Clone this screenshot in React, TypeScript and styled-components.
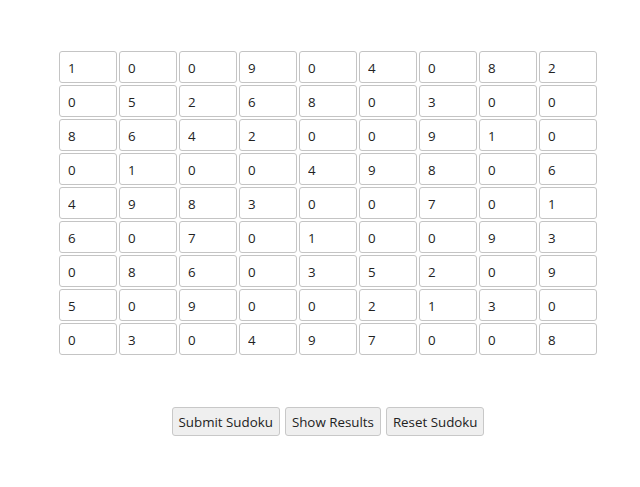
import React, { useState } from 'react';
import styled, { createGlobalStyle } from 'styled-components';

const START: number[][] = [
    [1, 0, 0, 9, 0, 4, 0, 8, 2],
    [0, 5, 2, 6, 8, 0, 3, 0, 0],
    [8, 6, 4, 2, 0, 0, 9, 1, 0],
    [0, 1, 0, 0, 4, 9, 8, 0, 6],
    [4, 9, 8, 3, 0, 0, 7, 0, 1],
    [6, 0, 7, 0, 1, 0, 0, 9, 3],
    [0, 8, 6, 0, 3, 5, 2, 0, 9],
    [5, 0, 9, 0, 0, 2, 1, 3, 0],
    [0, 3, 0, 4, 9, 7, 0, 0, 8],
];

const Global = createGlobalStyle`
    body {
        margin: 0;
        background: #fff;
        font-family: 'Open Sans', 'Noto Sans', sans-serif;
    }
`;

const App = () => {
    const [board, setBoard] = useState(START);

    const setCell = (r: number, c: number, v: string) => {
        const next = board.map((row) => row.slice());
        next[r][c] = Number(v) || 0;
        setBoard(next);
    };

    return (
        <Page>
            <Global />
            <Board>
                {board.map((row, r) => (
                    <Row key={r}>
                        {row.map((val, c) => (
                            <Cell
                                key={c}
                                type='text'
                                value={String(val)}
                                onChange={(e) => setCell(r, c, e.target.value)}
                            />
                        ))}
                    </Row>
                ))}
            </Board>
            <Actions>
                <Button>Submit Sudoku</Button>
                <Button>Show Results</Button>
                <Button onClick={() => setBoard(START)}>Reset Sudoku</Button>
            </Actions>
        </Page>
    );
};

export default App;

const Page = styled.div`
    display: flex;
    flex-direction: column;
    align-items: center;
    padding: 50px 0 0 16px;
`;

const Board = styled.div`
    display: flex;
    flex-direction: column;
`;

const Row = styled.div`
    display: flex;
`;

const Cell = styled.input`
    box-sizing: border-box;
    width: 58px;
    height: 32px;
    margin: 1px;
    padding: 1px 8px 0;
    border: 1px solid #c4c4c4;
    border-radius: 3px;
    font-family: 'Open Sans', 'Noto Sans', sans-serif;
    font-size: 13.333px;
    color: #222;
    background: #fff;
    outline: none;
`;

const Actions = styled.div`
    display: flex;
    gap: 5px;
    margin-top: 51px;
`;

const Button = styled.button`
    box-sizing: border-box;
    height: 29px;
    padding: 0 6px;
    border: 1px solid #c8c8c8;
    border-radius: 3px;
    background: #efefef;
    font-family: 'Open Sans', 'Noto Sans', sans-serif;
    font-size: 13.333px;
    color: #222;
    cursor: pointer;
`;
